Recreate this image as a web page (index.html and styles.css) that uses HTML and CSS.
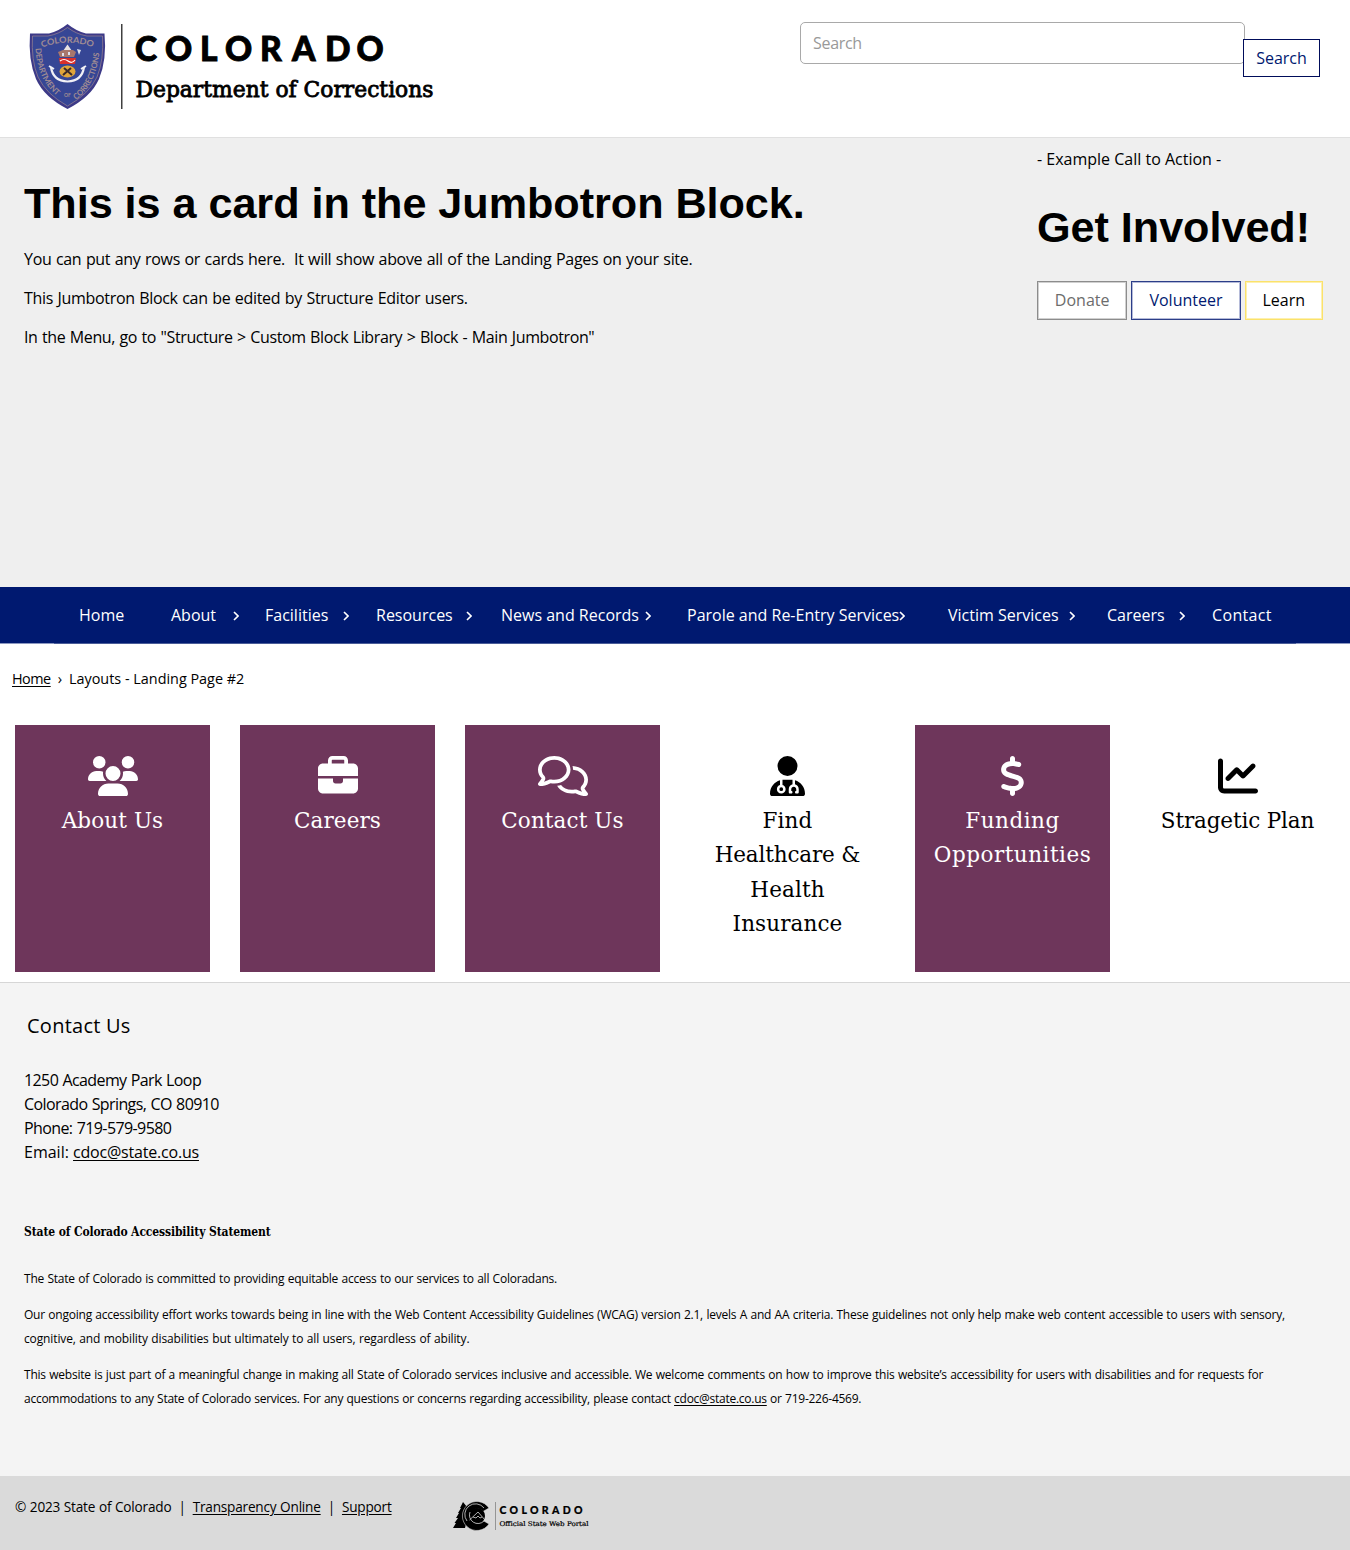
FILE: index.html
```html
<!DOCTYPE html>
<html lang="en">
<head>
<meta charset="utf-8">
<title>Layouts - Landing Page #2 | Department of Corrections</title>
<link rel="stylesheet" href="styles.css">
</head>
<body>
<header class="site-header">
  <svg class="logo" width="450" height="137" viewBox="0 0 450 137" role="img" aria-label="Colorado Department of Corrections">
    <defs>
      <path id="arc-top" d="M42 47.500Q67 38 94 47.500"/>
      <path id="arc-left" d="M35.500 48Q37 82 61 99"/>
      <path id="arc-right" d="M76 100Q97 84 100 48"/>
    </defs>
    <path class="shield-edge" d="M67.500 24Q76 31 86 33.500H104.500Q107 60 99 79Q91 97 67.500 109Q44 97 36 79Q28 60 30 33.500H49Q59 31 67.500 24Z"/>
    <path class="shield-line" d="M67.500 27.500Q76 34 87 36H102.500Q104 60 97 77Q89 94 67.500 106Q46 94 38 77Q31 60 32.500 36H48Q59 34 67.500 27.500Z"/>
    <text class="badge-text badge-top"><textPath href="#arc-top" textLength="52" lengthAdjust="spacingAndGlyphs">COLORADO</textPath></text>
    <text class="badge-text"><textPath href="#arc-left" textLength="54" lengthAdjust="spacingAndGlyphs">DEPARTMENT</textPath></text>
    <text class="badge-text"><textPath href="#arc-right" textLength="54" lengthAdjust="spacingAndGlyphs">CORRECTIONS</textPath></text>
    <text class="badge-text badge-of" x="64" y="96.500">OF</text>
    <path fill="#e8e3e2" d="M67.500 44.500L72 51H63Z"/>
    <path fill="#a8776c" d="M58 52L63 50H73L76 52L74 57H60Z"/>
    <path fill="#dfe2ee" d="M62 53h2v3h-2zM68 52h2v3h-2zM77 49l4 1-2 5z"/>
    <path fill="#d9302b" d="M59 58H76L75 64H60Z"/>
    <path fill="none" stroke="#fff" stroke-width="1.200" d="M60 61Q64 58 68 61T75 60"/>
    <path fill="none" stroke="#f0f0f6" stroke-width="2.200" d="M51 67Q53 81 67.500 81.500Q82 81 84 67"/>
    <path fill="none" stroke="#f0f0f6" stroke-width="2" d="M49 66l5 3M86 66l-5 3"/>
    <ellipse cx="67.500" cy="71.500" rx="8" ry="6" fill="#e0a53a"/>
    <path stroke="#3b2a2a" stroke-width="2" d="M63 75l8-7M72 75l-8-7"/>
    <path class="rule" d="M121.800 24V109"/>
    <text class="wordmark" y="61" x="135 165 200 225 260 292 325 356.500">COLORADO</text>
    <text class="agency" x="135.500" y="97" textLength="298" lengthAdjust="spacingAndGlyphs">Department of Corrections</text>
  </svg>
  <form class="search">
    <input class="search-field" type="text" placeholder="Search" aria-label="Search">
    <button class="search-button" type="button">Search</button>
  </form>
</header>

<section class="jumbotron">
  <div class="jumbo-main">
    <h1 class="jumbo-title">This is a card in the Jumbotron Block.</h1>
    <p class="copy">You can put any rows or cards here.&nbsp; It will show above all of the Landing Pages on your site.</p>
    <p class="copy">This Jumbotron Block can be edited by Structure Editor users.</p>
    <p class="copy copy-tight">In the Menu, go to "Structure &gt; Custom Block Library &gt; Block - Main Jumbotron"</p>
  </div>
  <div class="jumbo-side">
    <p>- Example Call to Action -</p>
    <h2 class="jumbo-title">Get Involved!</h2>
    <div class="actions">
      <a class="btn btn-donate">Donate</a>
      <a class="btn btn-volunteer">Volunteer</a>
      <a class="btn btn-learn">Learn</a>
    </div>
  </div>
</section>

<nav class="main-nav">
  <a class="nav-item">Home</a>
  <a class="nav-item">About<svg class="chev" viewBox="0 0 6 10"><path d="M1 1l4 4-4 4"/></svg></a>
  <a class="nav-item">Facilities<svg class="chev" viewBox="0 0 6 10"><path d="M1 1l4 4-4 4"/></svg></a>
  <a class="nav-item">Resources<svg class="chev" viewBox="0 0 6 10"><path d="M1 1l4 4-4 4"/></svg></a>
  <a class="nav-item">News and Records<svg class="chev" viewBox="0 0 6 10"><path d="M1 1l4 4-4 4"/></svg></a>
  <a class="nav-item">Parole and Re-Entry Services<svg class="chev" viewBox="0 0 6 10"><path d="M1 1l4 4-4 4"/></svg></a>
  <a class="nav-item">Victim Services<svg class="chev" viewBox="0 0 6 10"><path d="M1 1l4 4-4 4"/></svg></a>
  <a class="nav-item">Careers<svg class="chev" viewBox="0 0 6 10"><path d="M1 1l4 4-4 4"/></svg></a>
  <a class="nav-item nav-last">Contact</a>
</nav>

<div class="breadcrumb"><a class="link crumb-home">Home</a><span>›</span><span>Layouts - Landing Page #2</span></div>

<main class="cards">
  <a class="card card-filled">
    <svg class="icon" width="50" height="40" viewBox="0 0 640 512"><path d="M144 0a80 80 0 1 1 0 160A80 80 0 1 1 144 0zM512 0a80 80 0 1 1 0 160A80 80 0 1 1 512 0zM0 298.700C0 239.800 47.800 192 106.700 192h42.700c15.900 0 31 3.500 44.600 9.700c-1.300 7.200-1.900 14.700-1.900 22.300c0 38.200 16.800 72.500 43.300 96c-.2 0-.4 0-.7 0H21.300C9.600 320 0 310.400 0 298.700zM405.300 320c-.2 0-.4 0-.7 0c26.600-23.500 43.300-57.800 43.300-96c0-7.600-.7-15-1.900-22.300c13.600-6.300 28.700-9.700 44.600-9.700h42.700C592.200 192 640 239.800 640 298.700c0 11.800-9.600 21.300-21.300 21.300H405.300zM224 224a96 96 0 1 1 192 0 96 96 0 1 1 -192 0zM128 485.300C128 411.700 187.700 352 261.300 352H378.700C452.300 352 512 411.700 512 485.300c0 14.700-11.900 26.700-26.700 26.700H154.700c-14.700 0-26.700-11.900-26.700-26.700z"/></svg>
    <span class="card-title">About Us</span>
  </a>
  <a class="card card-filled">
    <svg class="icon" width="40" height="40" viewBox="0 0 512 512"><path d="M184 48H328c4.400 0 8 3.600 8 8V96H176V56c0-4.400 3.600-8 8-8zm-56 8V96H64C28.700 96 0 124.700 0 160v96H192 320 512V160c0-35.300-28.700-64-64-64H384V56c0-30.900-25.100-56-56-56H184c-30.900 0-56 25.100-56 56zM512 288H320v32c0 17.700-14.300 32-32 32H224c-17.700 0-32-14.300-32-32V288H0V416c0 35.300 28.700 64 64 64H448c35.300 0 64-28.700 64-64V288z"/></svg>
    <span class="card-title">Careers</span>
  </a>
  <a class="card card-filled">
    <svg class="icon" width="50" height="40" viewBox="0 0 640 512"><path d="M88.200 309.100c9.800-18.300 6.800-40.800-7.500-55.800C59.400 230.900 48 204 48 176c0-63.500 63.800-128 160-128s160 64.500 160 128s-63.800 128-160 128c-13.100 0-25.800-1.300-37.800-3.600c-10.400-2-21.200-.6-30.700 4.200c-4.100 2.100-8.300 4.100-12.600 6c-16 7.200-32.900 13.500-49.900 18c2.800-4.600 5.400-9.100 7.900-13.600c1.100-1.900 2.200-3.900 3.200-5.900zM208 352c114.900 0 208-78.800 208-176S322.900 0 208 0S0 78.800 0 176c0 41.800 17.200 80.100 45.900 110.300c-.9 1.700-1.900 3.500-2.800 5.100c-10.300 18.400-22.300 36.500-36.600 52.100c-6.600 7-8.300 17.200-4.600 25.900C5.800 378.300 14.400 384 24 384c43 0 86.500-13.300 122.700-29.700c4.800-2.200 9.600-4.500 14.200-6.800c15.100 3 30.900 4.500 47.100 4.500zM432 480c16.200 0 31.900-1.600 47.100-4.500c4.600 2.300 9.400 4.600 14.200 6.800C529.500 498.700 573 512 616 512c9.600 0 18.200-5.700 22-14.500c3.800-8.800 2-19-4.600-25.900c-14.200-15.600-26.200-33.700-36.600-52.100c-.9-1.700-1.900-3.400-2.800-5.100C622.800 384.100 640 345.800 640 304c0-94.400-87.900-171.500-198.200-175.800c4.100 15.200 6.200 31.200 6.200 47.800l0 .6c87.200 6.700 144 67.500 144 127.400c0 28-11.400 54.900-32.700 77.200c-14.300 15-17.300 37.600-7.500 55.800c1.100 2 2.200 4 3.200 5.900c2.500 4.500 5.200 9 7.900 13.600c-17-4.500-33.900-10.700-49.900-18c-4.300-1.900-8.500-3.900-12.600-6c-9.500-4.800-20.300-6.200-30.700-4.200c-12.100 2.400-24.700 3.600-37.800 3.600c-61.700 0-110-26.500-136.800-62.300c-16 5.400-32.800 9.400-50 11.800C279 439.800 350 480 432 480z"/></svg>
    <span class="card-title">Contact Us</span>
  </a>
  <a class="card">
    <svg class="icon" width="35" height="40" viewBox="0 0 448 512"><path d="M224 256A128 128 0 1 0 224 0a128 128 0 1 0 0 256zm-96 55.200C54 332.900 0 401.300 0 482.300C0 498.700 13.300 512 29.700 512H418.300c16.400 0 29.700-13.300 29.700-29.700c0-81-54-149.400-128-171.100V362c27.600 7.100 48 32.200 48 62v40c0 8.800-7.200 16-16 16H336c-8.800 0-16-7.200-16-16s7.200-16 16-16V424c0-17.700-14.300-32-32-32s-32 14.300-32 32v24c8.800 0 16 7.200 16 16s-7.200 16-16 16H256c-8.800 0-16-7.200-16-16V424c0-29.800 20.400-54.900 48-62V304.900c-6-.6-12.100-.9-18.300-.9H178.300c-6.200 0-12.300 .3-18.300 .9v65.400c23.100 6.900 40 28.300 40 53.700c0 30.900-25.100 56-56 56s-56-25.100-56-56c0-25.400 16.900-46.800 40-53.700V311.200zM144 448a24 24 0 1 0 0-48 24 24 0 1 0 0 48z"/></svg>
    <span class="card-title">Find<br><span class="snug">Healthcare &amp;</span><br>Health<br>Insurance</span>
  </a>
  <a class="card card-filled">
    <svg class="icon" width="25" height="40" viewBox="0 0 320 512"><path d="M160 0c17.700 0 32 14.300 32 32V67.700c1.600 .2 3.100 .4 4.700 .7c.4 .1 .7 .1 1.100 .2l48 8.800c17.400 3.200 28.900 19.900 25.700 37.200s-19.900 28.900-37.200 25.700l-47.500-8.700c-31.300-4.600-58.900-1.500-78.300 6.200s-27.200 18.300-29 28.100c-2 10.700-.5 16.700 1.200 20.400c1.800 3.900 5.500 8.300 12.800 13.200c16.300 10.700 41.300 17.700 73.700 26.300l2.900 .8c28.600 7.600 63.600 16.800 89.600 33.800c14.200 9.300 27.600 21.900 35.900 39.500c8.500 17.900 10.300 37.900 6.400 59.200c-6.900 38-33.100 63.400-65.600 76.700c-13.700 5.600-28.600 9.200-44.400 11V480c0 17.700-14.300 32-32 32s-32-14.300-32-32V445.100c-.4-.1-.9-.1-1.300-.2l-.2 0 0 0c-24.400-3.800-64.500-14.300-91.500-26.300c-16.100-7.200-23.400-26.100-16.200-42.200s26.100-23.400 42.200-16.200c20.900 9.300 55.300 18.500 75.200 21.600c31.900 4.700 58.200 2 76-5.300c16.900-6.900 24.600-16.900 26.800-28.900c1.900-10.600 .4-16.700-1.300-20.400c-1.900-4-5.600-8.400-13-13.300c-16.400-10.700-41.500-17.700-74-26.300l-2.800-.7 0 0C119.400 279.300 84.400 270 58.400 253c-14.200-9.300-27.500-22-35.800-39.600c-8.400-17.900-10.100-37.900-6.100-59.200C23.700 116 52.300 91.200 84.800 78.300c13.300-5.300 27.900-8.900 43.200-11V32c0-17.700 14.300-32 32-32z"/></svg>
    <span class="card-title roomy">Funding<br>Opportunities</span>
  </a>
  <a class="card">
    <svg class="icon" width="40" height="40" viewBox="0 0 512 512"><path d="M64 64c0-17.700-14.300-32-32-32S0 46.300 0 64V400c0 44.200 35.800 80 80 80H480c17.700 0 32-14.300 32-32s-14.300-32-32-32H80c-8.800 0-16-7.200-16-16V64zm406.600 86.600c12.500-12.500 12.500-32.800 0-45.300s-32.800-12.500-45.300 0L320 210.700l-57.400-57.400c-12.500-12.500-32.800-12.500-45.300 0l-112 112c-12.500 12.500-12.500 32.800 0 45.300s32.800 12.500 45.300 0L240 221.300l57.400 57.400c12.500 12.500 32.800 12.500 45.300 0l128-128z"/></svg>
    <span class="card-title snug">Stragetic Plan</span>
  </a>
</main>

<footer class="site-footer">
  <h2 class="footer-title">Contact Us</h2>
  <address class="address"><span class="address-lines">1250 Academy Park Loop<br>Colorado Springs, CO 80910<br>Phone: 719-579-9580</span><br>Email: <a class="link email">cdoc@state.co.us</a></address>
  <h3 class="statement-title">State of Colorado Accessibility Statement</h3>
  <div class="statement">
    <p>The State of Colorado is committed to providing equitable access to our services to all Coloradans.</p>
    <p>Our ongoing accessibility effort works towards being in line with the Web Content Accessibility Guidelines (WCAG) version 2.1, levels A and AA criteria. These guidelines not only help make web content accessible to users with sensory,<br><span class="loose">cognitive, and mobility disabilities but ultimately to all users, regardless of ability.</span></p>
    <p>This website is just part of a meaningful change in making all State of Colorado services inclusive and accessible. We welcome comments on how to improve this website’s accessibility for users with disabilities and for requests for<br><span class="tight">accommodations to any State of Colorado services. For any questions or concerns regarding accessibility, please contact <a class="link">cdoc@state.co.us</a> or 719-226-4569.</span></p>
  </div>
</footer>

<div class="legal">
  <div class="legal-links"><span>© 2023 State of Colorado</span><span>|</span><a class="link">Transparency Online</a><span>|</span><a class="link">Support</a></div>
  <svg class="portal" width="140" height="32" viewBox="0 0 140 32" role="img" aria-label="Colorado Official State Web Portal">
    <path d="M10 2L14 7L13 8L16 12L12 28H0L3 23L1.500 23L5 18H3L6 13H5L8 8H7Z"/>
    <path stroke="#dadada" stroke-width=".6" d="M36 8A14.500 14.500 0 1 0 36 24L30 20.500A7 7 0 1 1 30 11.500Z"/>
    <circle cx="24" cy="16" r="8"/>
    <path class="portal-line" d="M14 21A10.500 10.500 0 0 1 31 8M16.500 20L25 12L32 20M20 17l3 1 2-2 2 2 2-1M17 12A8.500 8.500 0 0 0 31 21"/>
    <path class="portal-rule" d="M42.500 2V30"/>
    <text class="portal-word" x="46.500" y="14" textLength="83">COLORADO</text>
    <text class="portal-tag" x="46.500" y="25.500" textLength="89" lengthAdjust="spacingAndGlyphs">Official State Web Portal</text>
  </svg>
</div>
</body>
</html>
```
FILE: styles.css
```css
* { box-sizing: border-box; }
body {
  margin: 0;
  width: 1350px;
  background: #fff;
  color: #000;
  font: 16px/24px "Open Sans", "Noto Sans", sans-serif;
}
h1, h2, h3, p { margin: 0; }
p, address, .nav-item, .btn { white-space: nowrap; }
.link { text-decoration: underline; text-underline-offset: 2px; }

.site-header {
  display: flex;
  justify-content: space-between;
  align-items: flex-start;
  height: 137px;
  padding-right: 30px;
}
.logo { display: block; }
.shield-edge { fill: #3d3a88; }
.shield-line { fill: #364695; stroke: #9b8490; stroke-width: .7; }
.badge-text { font: 700 8px "Lato", sans-serif; fill: #a08c93; }
.badge-top { font-size: 8.500px; }
.badge-of { font-size: 5px; }
.rule { stroke: #111; stroke-width: 1.200; }
.wordmark { font: 900 33.500px "Lato", sans-serif; stroke: #000; stroke-width: .9; }
.agency { font: 21.500px "DejaVu Serif", serif; stroke: #000; stroke-width: .8; }

.search { display: flex; padding-top: 22px; }
.search-field {
  width: 445px;
  height: 42px;
  padding: 0 12px;
  border: 1px solid #a9a9a9;
  border-radius: 5px;
  background: #fff;
  font: inherit;
  letter-spacing: -.3px;
}
.search-field::placeholder { color: #999; }
.search-button {
  width: 77px;
  height: 38px;
  margin: 17px 0 0 -2px;
  padding: 0;
  border: 1px solid #000c5a;
  background: #fff;
  color: #001970;
  font: inherit;
}

.jumbotron {
  display: flex;
  justify-content: space-between;
  height: 450px;
  padding: 0 27px 0 24px;
  border-top: 1px solid #e0e0e0;
  background: #efefef;
}
.jumbo-main { display: flex; flex-direction: column; gap: 15px; padding-top: 39px; }
.jumbo-side { width: 286px; padding-top: 9px; }
.jumbo-title { font: 700 43.200px/52px "Liberation Sans", Arial, sans-serif; letter-spacing: -.04px; }
.jumbo-main .jumbo-title { margin-bottom: 3px; }
.jumbo-side .jumbo-title { margin: 30px 0 28px; }
.copy { letter-spacing: -.32px; word-spacing: .7px; }
.copy-tight { letter-spacing: -.385px; }
.actions { display: flex; gap: 4px; }
.btn {
  height: 39px;
  border: 1px solid;
  background: #fff;
  line-height: 37px;
  text-align: center;
}
.btn-donate { width: 91px; border-color: #8c8c8c; box-shadow: inset 0 0 0 1px #d0d0d0; color: #6c6c6c; }
.btn-volunteer { width: 110px; border-color: #2c3e88; box-shadow: inset 0 0 0 1px #b5bbd9; color: #001970; }
.btn-learn { width: 79px; border-color: #fbe26a; box-shadow: inset 0 0 0 1px #fdf0b0; }

.main-nav {
  display: grid;
  grid-template-columns: 92px 94px 111px 125px 186px 261px 159px 105px 80px;
  align-items: center;
  height: 56px;
  padding-left: 79px;
  background: #001970;
  color: #fff;
}
.nav-item { display: flex; justify-content: space-between; align-items: center; }
.nav-last { letter-spacing: .35px; }
.chev { width: 6px; height: 10px; margin-top: 2px; fill: none; stroke: #fff; stroke-width: 1.600; flex: none; }
.nav-item:nth-child(2) { padding-right: 26px; }
.nav-item:nth-child(3) { padding-right: 27px; }
.nav-item:nth-child(4) { padding-right: 29px; }
.nav-item:nth-child(5) { padding-right: 36px; }
.nav-item:nth-child(6) { padding-right: 43px; }
.nav-item:nth-child(7) { padding-right: 32px; }
.nav-item:nth-child(8) { padding-right: 27px; }

.breadcrumb {
  display: flex;
  gap: 7px;
  height: 82px;
  padding: 24px 12px;
  background: linear-gradient(90deg, #8c98c0 54px, #4a5c98 54px, #4a5c98 1296px, #8c98c0 1296px) 0 0 / 100% 1px no-repeat;
  font-size: 14.400px;
}
.crumb-home { letter-spacing: -.5px; }

.cards { display: grid; grid-template-columns: repeat(6, 195px); gap: 30px; padding: 0 15px 10px; }
.card { display: flex; flex-direction: column; align-items: center; height: 247px; padding-top: 31px; }
.card-filled { background: #6e365b; color: #fff; }
.icon { fill: currentColor; flex: none; margin-bottom: 8px; }
.card-title {
  font: 21.500px/34.300px "DejaVu Serif", serif;
  letter-spacing: .1px;
  text-align: center;
  white-space: nowrap;
}
.card-title.roomy { letter-spacing: .5px; }
.snug, .card-title.snug { letter-spacing: -.15px; }

.site-footer { height: 494px; padding: 30px 24px 0; border-top: 1px solid #d6d6d6; background: #f4f4f4; }
.footer-title { padding-left: 3px; font-weight: 400; font-size: 20px; line-height: 26px; letter-spacing: .25px; }
.address { margin-top: 29px; font-style: normal; }
.address-lines { letter-spacing: -.6px; word-spacing: .7px; }
.email { letter-spacing: -.2px; }
.statement-title { margin: 56px 0 23px; font: 700 12px/24px "DejaVu Serif Condensed", "DejaVu Serif", serif; letter-spacing: -.12px; }
.statement { display: flex; flex-direction: column; gap: 12px; font-size: 12px; letter-spacing: -.225px; word-spacing: .5px; }
.loose { letter-spacing: -.126px; }
.tight { letter-spacing: -.26px; }

.legal { display: flex; height: 74px; padding: 19px 15px 0; background: #dadada; }
.legal-links { display: flex; gap: 7px; width: 438px; font-size: 13.600px; letter-spacing: -.2px; white-space: nowrap; word-spacing: .4px; }
.portal { margin-top: 5px; }
.portal-line { fill: none; stroke: #dadada; stroke-width: .8; }
.portal-rule { stroke: #777; stroke-width: .7; }
.portal-word { font: 900 10.500px "Lato", sans-serif; stroke: #000; stroke-width: .2; }
.portal-tag { font: 6.500px "DejaVu Serif", serif; stroke: #000; stroke-width: .2; }
```
